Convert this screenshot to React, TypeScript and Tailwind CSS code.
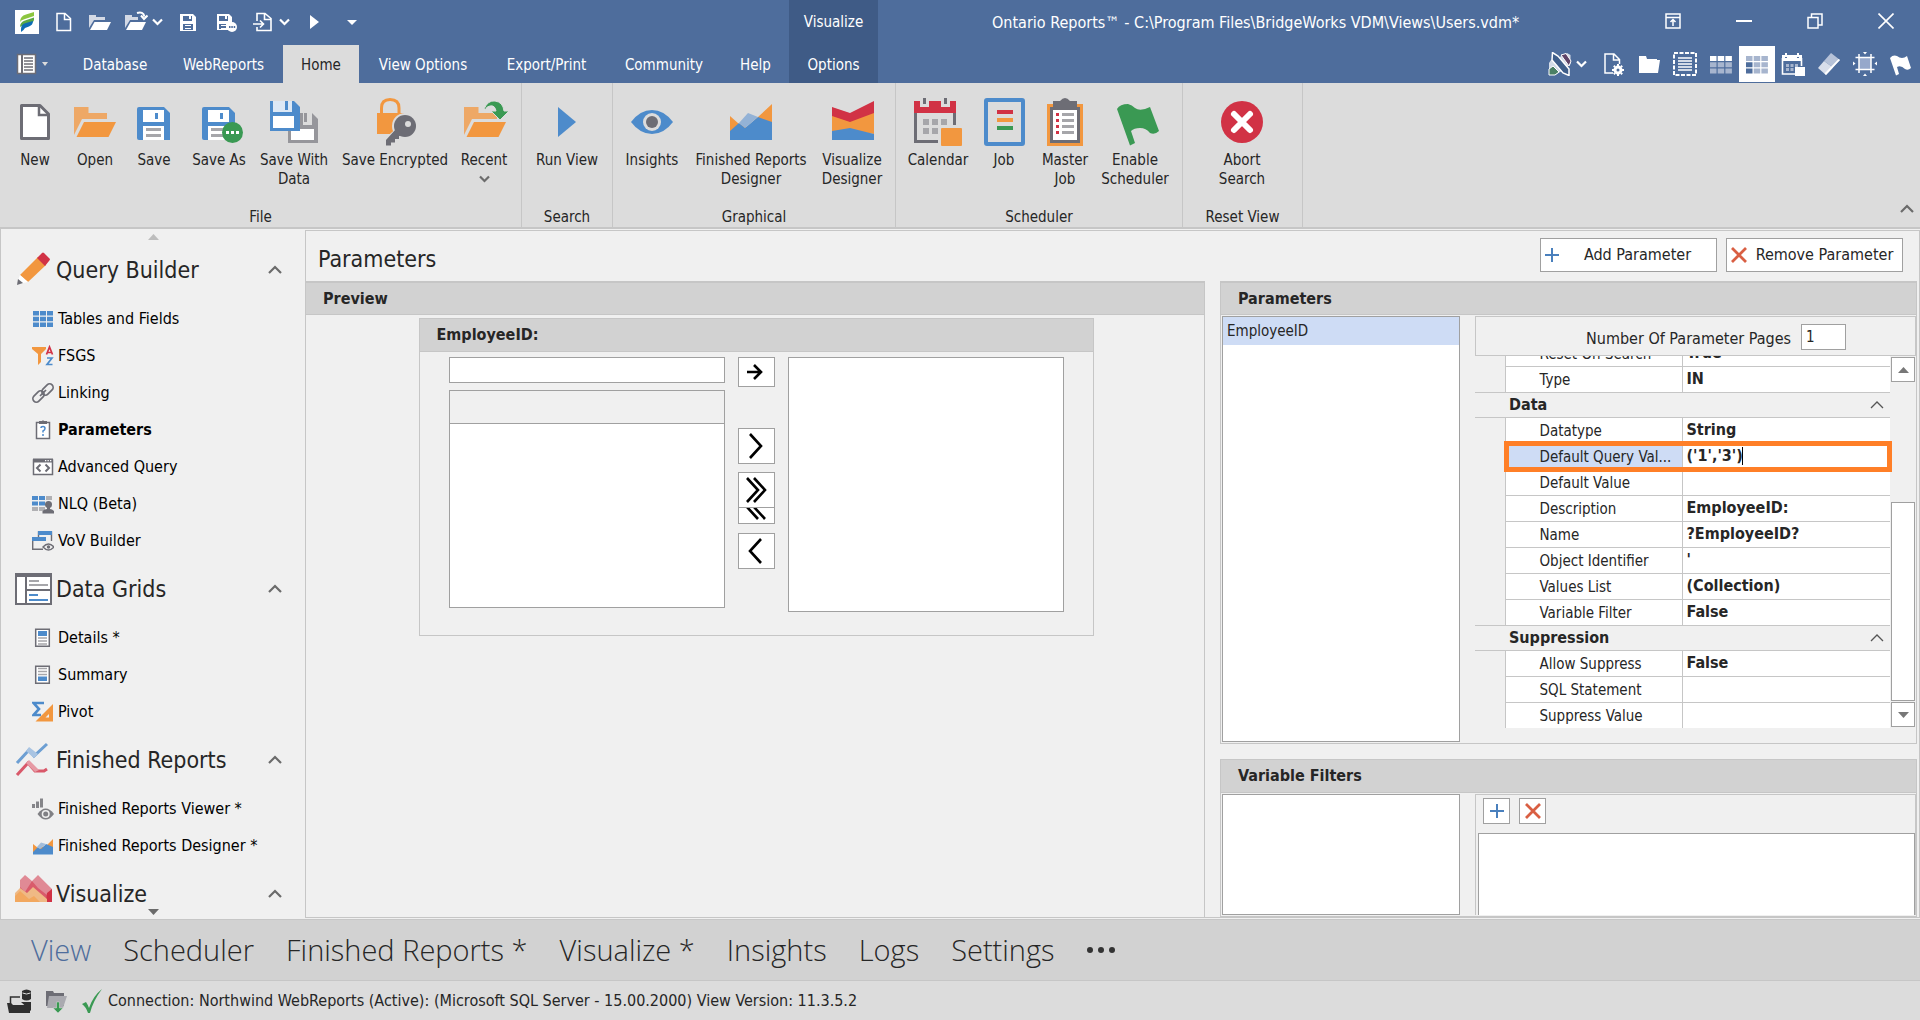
import type { ReactNode } from "react";

const BLUE = "#4d8bcb";
const ORANGE = "#f2973f";
const LIGHT_ORANGE = "#eea866";
const RED = "#d13245";
const GREEN = "#3a9953";
const GREY = "#6d6d75";
const MID = "#a6a6aa";

function Ico({ s = 48, children }: { s?: number; children: ReactNode }) {
  return (
    <svg width={s} height={s} viewBox={`0 0 ${s} ${s}`} fill="none" className="block shrink-0" aria-hidden="true">
      {children}
    </svg>
  );
}

/* ---------- chevrons and small marks ---------- */

function ChevronUp({ color = "#6b6b6b", thin = false }: { color?: string; thin?: boolean }) {
  return (
    <svg width="14" height="10" viewBox="0 0 14 10" fill="none" className="block shrink-0" aria-hidden="true">
      <path d="M1 8 L7 2 L13 8" stroke={color} strokeWidth={thin ? 1.3 : 2.2} />
    </svg>
  );
}

function ChevronDown({ color = "#fff" }: { color?: string }) {
  return (
    <svg width="11" height="8" viewBox="0 0 11 8" fill="none" className="block shrink-0" aria-hidden="true">
      <path d="M1 1.5 L5.5 6 L10 1.5" stroke={color} strokeWidth="2.2" />
    </svg>
  );
}

function Triangle({ up = false, color = "#777" }: { up?: boolean; color?: string }) {
  return (
    <svg width="11" height="6" viewBox="0 0 11 6" className="block shrink-0" aria-hidden="true">
      <path d={up ? "M0 6 L5.5 0 L11 6Z" : "M0 0 L11 0 L5.5 6Z"} fill={color} />
    </svg>
  );
}

function PlusMark() {
  return (
    <svg width="14" height="14" viewBox="0 0 14 14" className="block shrink-0" aria-hidden="true">
      <path d="M7 0V14M0 7H14" stroke="#4a80bd" strokeWidth="2" />
    </svg>
  );
}

function CrossMark() {
  return (
    <svg width="16" height="16" viewBox="0 0 16 16" className="block shrink-0" aria-hidden="true">
      <path d="M1 1L15 15M15 1L1 15" stroke="#d95f43" strokeWidth="2.8" />
    </svg>
  );
}

/* ---------- ribbon icons, 48px ---------- */

const FolderShape = ({ x = 0 }: { x?: number }) => (
  <g transform={`translate(${x} 0)`}>
    <path d="M3 9H17.500V15H36V21H11L3 37Z" fill={LIGHT_ORANGE} />
    <path d="M13 24H45L37.500 39H5.500Z" fill={ORANGE} />
  </g>
);

const NewIcon = () => (
  <Ico>
    <path d="M10.500 7.500H29L37.500 16V40.500H10.500Z" fill="#fff" stroke={GREY} strokeWidth="3" strokeLinejoin="round" />
    <path d="M28 7V17H38" stroke={GREY} strokeWidth="2.500" />
  </Ico>
);
const OpenIcon = () => (
  <Ico>
    <FolderShape />
  </Ico>
);
const FloppyShape = () => (
  <>
    <path d="M9 9H34L40 15V42H9Q7 42 7 40V11Q7 9 9 9Z" fill={BLUE} />
    <path d="M13 12H34V24H13Z" fill="#fff" />
    <path d="M25 15H28V21H25Z" fill={BLUE} />
    <path d="M13 28H34V42H13Z" fill="#fff" />
    <path d="M16 30H31V33H16ZM16 36H31V39H16Z" fill={MID} />
  </>
);
const SaveIcon = () => (
  <Ico>
    <FloppyShape />
  </Ico>
);
const SaveAsIcon = () => (
  <Ico>
    <FloppyShape />
    <circle cx="37.500" cy="34.500" r="10.500" fill={GREEN} />
    <path d="M31 33h3v3h-3zM36 33h3v3h-3zM41 33h3v3h-3z" fill="#fff" />
  </Ico>
);
const SaveWithDataIcon = () => (
  <Ico>
    <path d="M18 15H42L48 21V45H18Z" fill="#96969b" />
    <path d="M33 15H42V27H33Z" fill="#dcdcdc" />
    <path d="M34 15H37V24H34Z" fill="#96969b" />
    <path d="M21 31H44V42H21Z" fill="#fff" />
    <path d="M0 3H24L30 9V33H0Z" fill={BLUE} />
    <path d="M3 3H22V14H3Z" fill="#dce8f5" />
    <path d="M15 3H18V12H15Z" fill={BLUE} />
    <path d="M3 18H24V30H3Z" fill="#fff" />
  </Ico>
);
const LockKeyIcon = () => (
  <Ico>
    <path d="M10.500 17V10Q10.500 1.500 19 1.500Q28 1.500 28 10V17" stroke={ORANGE} strokeWidth="3" />
    <path d="M6 15H33V36H6Z" fill={ORANGE} />
    <circle cx="34" cy="28" r="13" fill="#dcdcdc" />
    <path d="M28 28L12 42V48H22V44H26V40H30L38 35Z" fill="#dcdcdc" />
    <circle cx="34" cy="28" r="11" fill={GREY} />
    <path d="M25 31L15 42V47.500H20V44.500H24V41H28V38L34 37Z" fill={GREY} />
    <circle cx="37" cy="26" r="3" fill="#dcdcdc" />
  </Ico>
);
const RecentIcon = () => (
  <Ico>
    <FolderShape x={1} />
    <path d="M24 11Q28 2 35 3Q43 4 44 13H49L40 22L31 13H36Q35 7 30 8Q27 8 25 12Z" fill={GREEN} stroke="#dcdcdc" />
  </Ico>
);
const RunIcon = () => (
  <Ico>
    <path d="M15 9L33 24L15 39Z" fill={BLUE} />
  </Ico>
);
const EyeIcon = () => (
  <Ico>
    <path d="M3 24Q12 12 24 12Q36 12 45 24Q36 36 24 36Q12 36 3 24Z" fill={BLUE} />
    <circle cx="24" cy="24" r="9" fill="#dcdcdc" />
    <circle cx="24" cy="24" r="6" fill={GREY} />
  </Ico>
);
const AreaIcon = () => (
  <Ico>
    <path d="M3 18L12 26L20 29L31 19L45 6V26L30 38L3 38Z" fill={ORANGE} />
    <path d="M3 33L12 25L18 30L31 19L45 24V42H3Z" fill={BLUE} />
    <path d="M12 25L21 15L31 19L18 30Z" fill="#93b2d6" />
  </Ico>
);
const VisualizeDesignerIcon = () => (
  <Ico>
    <path d="M4 9L22 15L46 3V16L22 26L4 19Z" fill={RED} />
    <path d="M4 18L22 24L46 15V36L22 32L4 34Z" fill={ORANGE} />
    <path d="M4 33L22 30L46 36V42H4Z" fill={BLUE} />
  </Ico>
);
const CalendarIcon = () => (
  <Ico>
    <path d="M1.500 12V43.500H24M40.500 12V27" stroke={GREY} strokeWidth="3" />
    <path d="M0 3H42V15H0Z" fill={RED} />
    <path d="M6 0H15V9H6ZM27 0H36V9H27Z" fill="#dcdcdc" />
    <path d="M9 0H12V6H9ZM30 0H33V6H30Z" fill={GREY} />
    <path d="M9 21h6v6h-6zM18 21h6v6h-6zM27 21h6v6h-6zM9 30h6v6h-6zM18 30h6v6h-6z" fill={MID} />
    <rect x="27" y="30" width="21" height="18" rx="1" fill={ORANGE} />
  </Ico>
);
const JobIcon = () => (
  <Ico>
    <rect x="6" y="2" width="37" height="44" rx="1" stroke={BLUE} strokeWidth="4" />
    <path d="M17 12H33V16H17Z" fill={RED} />
    <path d="M17 20H33V24H17Z" fill={ORANGE} />
    <path d="M17 28H33V32H17Z" fill={GREEN} />
  </Ico>
);
const MasterJobIcon = () => (
  <Ico>
    <path d="M6 6H42V48H6Z" fill={ORANGE} />
    <path d="M9 9H39V45H9Z" fill={GREY} />
    <path d="M12 3H19Q24 -3 29 3H36V12H12Z" fill={GREY} />
    <path d="M12 12H36V42H12Z" fill="#fff" />
    <path d="M15 15h3v3h-3zM15 21h3v3h-3zM15 27h3v3h-3zM15 33h3v3h-3z" fill={RED} />
    <path d="M21 15h12v3h-12zM21 21h12v3h-12zM21 27h12v3h-12zM21 33h12v3h-12z" fill={MID} />
  </Ico>
);
const FlagIcon = () => (
  <Ico>
    <path d="M6 11Q9 6 17 6Q21 7 24 10Q29 14 39 9L48 33Q44 37 39 35Q35 30 29 30Q23 30 20 33L24 45L19 47.500Z" fill={GREEN} />
  </Ico>
);
const AbortIcon = () => (
  <Ico>
    <circle cx="24" cy="24" r="21" fill={RED} />
    <path d="M16 16L32 32M32 16L16 32" stroke="#fff" strokeWidth="6" strokeLinecap="round" />
  </Ico>
);

/* ---------- title bar icons, 24px, white ---------- */

const LogoIcon = () => (
  <Ico s={24}>
    <rect width="24" height="24" fill="#fff" />
    <path d="M5 12Q5 6 11 4.500L19 2V6L10 9Q6 10 5 12Z" fill="#8cc63f" />
    <path d="M5 17Q5 12 10 10.500L19 7.500V10Q18 13 14 14L9 15.500Q6 15.500 5 17Z" fill="#5aa845" />
    <path d="M6 22V19Q6 14 11 13L18 11Q18 15 14 16.500L10 18Q9 20 6 22Z" fill="#0d6cb5" />
  </Ico>
);
const QNew = () => (
  <Ico s={24}>
    <path d="M5 3.500H13L18.500 8.500V20.500H5Z M12.500 3.500V9.500H18.500" stroke="#fff" strokeWidth="1.500" />
  </Ico>
);
const QOpen = () => (
  <Ico s={24}>
    <path d="M1 5H8V7H17V10H6L1 18Z" fill="#d3d9e5" />
    <path d="M6.500 12H23L19 20H2Z" fill="#fff" />
  </Ico>
);
const QRecent = () => (
  <Ico s={24}>
    <path d="M1 5H8V7H14V10H6L1 18Z" fill="#d3d9e5" />
    <path d="M6.500 12H22L18 20H2Z" fill="#fff" />
    <path d="M13 3Q19 1 20.500 6.500M17 5.500L20 9L23.500 5.500" stroke="#fff" strokeWidth="2" />
  </Ico>
);
const QSave = () => (
  <Ico s={24}>
    <path d="M4 4H17L20 7V21H4Z" fill="#fff" />
    <path d="M7 6H16V11H7ZM7 14H17V20H7Z" fill="#4e6d9c" />
    <path d="M13 6H15V9H13ZM9 15H15V16H9ZM9 18H15V19H9Z" fill="#fff" />
  </Ico>
);
const QSaveAs = () => (
  <Ico s={24}>
    <path d="M3 4H15L18 7V20H3Z" fill="#fff" />
    <path d="M5 6H14V11H5ZM5 14H12V19H5Z" fill="#4e6d9c" />
    <path d="M11 6H13V9H11ZM7 15H12V16H7ZM7 18H12V19H7Z" fill="#fff" />
    <circle cx="18" cy="17" r="5" fill="#fff" />
    <path d="M15 16h1.500v2h-1.500zM17.300 16h1.500v2h-1.500zM19.700 16h1.500v2h-1.500z" fill="#4e6d9c" />
  </Ico>
);
const QExit = () => (
  <Ico s={24}>
    <path d="M6 11V3.500H14L20 8.500V20.500H6V17M13.500 3.500V9.500H20" stroke="#fff" strokeWidth="1.600" />
    <path d="M2 14H12M9 10.500L12.500 14L9 17.500" stroke="#fff" strokeWidth="1.600" />
  </Ico>
);
const QPlay = () => (
  <Ico s={24}>
    <path d="M8 5L17 12L8 19Z" fill="#fff" />
  </Ico>
);
const QDrop = () => (
  <Ico s={24}>
    <path d="M7 10H17L12 15Z" fill="#fff" />
  </Ico>
);

/* window buttons */
const WinRibbon = () => (
  <Ico s={16}>
    <path d="M1 1H15V15H1ZM1 4.500H15M8 13V7M5.500 9L8 6.500L10.500 9" stroke="#fff" strokeWidth="1.500" />
  </Ico>
);
const WinMin = () => (
  <Ico s={16}>
    <path d="M0 8H16" stroke="#fff" strokeWidth="2" />
  </Ico>
);
const WinRestore = () => (
  <Ico s={16}>
    <path d="M1 4.500H11V15H1ZM4.500 4V1H15V12H11.500" stroke="#fff" strokeWidth="1.500" />
  </Ico>
);
const WinClose = () => (
  <Ico s={16}>
    <path d="M0.500 0.500L15.500 15.500M15.500 0.500L0.500 15.500" stroke="#fff" strokeWidth="1.600" />
  </Ico>
);

/* view tool icons */
const MenuIcon = () => (
  <Ico s={22}>
    <path d="M1.500 1.500H19.500V20.500H1.500Z" fill="#fff" stroke="#6d6d75" strokeWidth="1.500" />
    <path d="M6 1V21" stroke="#6d6d75" strokeWidth="2" />
    <path d="M8 5H17M8 8H17M8 11H17M8 14H17M8 17H17" stroke="#6d6d75" strokeWidth="1.300" />
  </Ico>
);
const RulerPencil = () => (
  <Ico s={24}>
    <path d="M1 22.500V11L3 8L8 7L19 1L22.500 3V12L17 17L8 22.500Z" fill="#d4dce8" />
    <path d="M1 17L5 14L11 20L7 23H1Z" fill="#4b8065" stroke="#fff" />
    <path d="M13 3L18 1.500L23 9L21 14Z" fill="#5f4468" stroke="#fff" />
    <path d="M4.500 0.500L10 4L21 17V23.500L15 21L4 8Z" fill="#3f5e8a" stroke="#fff" strokeWidth="1.500" />
  </Ico>
);
const DocGear = () => (
  <Ico s={24}>
    <path d="M12 21H4V2H13L18.500 7.500V12M12.500 2V8H18.500" stroke="#fff" strokeWidth="1.500" />
    <circle cx="17" cy="18" r="3" stroke="#fff" strokeWidth="3" />
    <path d="M17 12V14M17 22V24M11 18H13M21 18H23M12.800 13.800L14 15M20 21L21.200 22.200M21.200 13.800L20 15M14 21L12.800 22.200" stroke="#fff" strokeWidth="2" />
  </Ico>
);
const FolderSolid = () => (
  <Ico s={24}>
    <path d="M2 4H9L10 7H20V8H23L21 21H2Z" fill="#fff" />
  </Ico>
);
const ListDashed = () => (
  <Ico s={24}>
    <rect x="1" y="1" width="22" height="22" stroke="#fff" strokeWidth="2" strokeDasharray="4 1.500" />
    <path d="M5 6H19M5 9H19M5 12H19M5 15H19M5 18H19" stroke="#fff" strokeWidth="1.600" />
  </Ico>
);
const Grid3 = ({ top, left, rest }: { top: string; left: string; rest: string }) => (
  <Ico s={24}>
    <path d="M1 4h6.500v5h-6.500z" fill={top} />
    <path d="M8.700 4h6.500v5h-6.500zM16.400 4h6.500v5h-6.500z" fill={top} />
    <path d="M1 10.300h6.500v5h-6.500zM1 16.600h6.500v5h-6.500z" fill={left} />
    <path d="M8.700 10.300h6.500v5h-6.500zM16.400 10.300h6.500v5h-6.500zM8.700 16.600h6.500v5h-6.500zM16.400 16.600h6.500v5h-6.500z" fill={rest} />
  </Ico>
);
const CalWhite = () => (
  <Ico s={24}>
    <path d="M1.500 6V22H14M20.500 6V14" stroke="#fff" strokeWidth="1.600" />
    <path d="M1 3H4V6H6V3H16V6H18V3H21V9H1Z" fill="#fff" />
    <path d="M4 1H6V5H4ZM16 1H18V5H16Z" fill="#fff" />
    <path d="M5 12h3v3h-3zM9.500 12h3v3h-3zM14 12h3v3h-3zM5 16h3v3h-3zM9.500 16h3v3h-3z" fill="#a7b5ce" />
    <path d="M14 15H24V24H14Z" fill="#fff" />
  </Ico>
);
const Eraser = () => (
  <Ico s={24}>
    <path d="M14 1L23 8L16 15.500L7 9Z" fill="#b6c2d8" />
    <path d="M7 9L16 15.500L9 23L1 16Z" fill="#d8deea" />
    <path d="M23 8L9 23L7.500 21.500L21.500 7Z" fill="#fff" />
  </Ico>
);
const FitIcon = () => (
  <Ico s={24}>
    <path d="M6 5H18V18H6Z" fill="#96a8cb" />
    <path d="M6 2V21M18 2V21M2.500 5.500H21.500M2.500 17.500H21.500" stroke="#fff" strokeWidth="1.500" />
    <path d="M10 0H14L12 2.500ZM10 24H14L12 21.500ZM0 9.500V13.500L2.500 11.500ZM24 9.500V13.500L21.500 11.500Z" fill="#fff" />
  </Ico>
);
const FlagWhite = () => (
  <Ico s={24}>
    <path d="M1 6Q4 2.500 8 4Q13 8 18 4L22 16Q19 19 16 17Q12 13 8 15L10 22L7 23.500Z" fill="#fff" />
  </Ico>
);

/* ---------- sidebar icons ---------- */

const PencilBig = () => (
  <Ico s={36}>
    <path d="M5 23L23 5L31 13L13 30Z" fill={ORANGE} />
    <path d="M22 6L27 1Q28 0 29 1L35 7Q35 8 34 9L30 14Z" fill={RED} />
    <path d="M5 23L13 30L8 31L3 28Z" fill="#fff" />
    <path d="M3 27L8 31L2 33Z" fill={GREY} />
  </Ico>
);
const DataGridBig = () => (
  <Ico s={38}>
    <path d="M1 4H36V34H1Z" fill="#fff" stroke={GREY} strokeWidth="2" />
    <path d="M0 3H37V7H0Z" fill={GREY} />
    <path d="M11 6V34M11 20H36" stroke={GREY} strokeWidth="2" />
    <path d="M14 11H24M14 15H33" stroke={MID} strokeWidth="2" />
    <path d="M14 25H23M14 30H33" stroke={BLUE} strokeWidth="2" />
  </Ico>
);
const ReportsBig = () => (
  <Ico s={36}>
    <path d="M2 21L14 8L19 14L32 2" stroke="#6d9fd3" strokeWidth="3" />
    <path d="M11 9L14 5L23 12L19 16Z" fill="#a9c4e2" />
    <path d="M2 33L13 21L20 29H29L32 27" stroke="#d9596a" strokeWidth="3" />
    <path d="M11 21L14 18L24 28L20 30Z" fill="#e69aa4" />
  </Ico>
);
const VisualizeBig = () => (
  <Ico s={38}>
    <path d="M5 5L10 0L17 6L23 0L37 14V27H5Z" fill="#e08a95" />
    <path d="M5 12L10 17L17 6L23 13L32 20V27H5Z" fill="#d95b6b" />
    <path d="M32 18L37 14V27H31Z" fill={RED} />
    <path d="M0 18L5 13L12 18L18 12L32 24V27H0Z" fill="#efb985" />
    <path d="M0 21L5 16L14 24L19 21L25 27H0Z" fill="#f2a85f" />
  </Ico>
);

const TablesIcon = () => (
  <Ico s={22}>
    <path d="M1 3h6v4.500h-6zM8 3h6v4.500h-6zM15 3h6v4.500h-6zM1 8.800h6v4.500h-6zM8 8.800h6v4.500h-6zM15 8.800h6v4.500h-6zM1 14.600h6v4.500h-6zM8 14.600h6v4.500h-6zM15 14.600h6v4.500h-6z" fill={BLUE} />
  </Ico>
);
const FsgsIcon = () => (
  <Ico s={22}>
    <path d="M0 2H14V4L9 9V17L6 20V9L0 4Z" fill={ORANGE} />
    <path d="M14.500 9.500L17.500 2L20.500 9.500M15.500 7.500H19.500" stroke={RED} strokeWidth="1.700" />
    <path d="M15 13H20L15 19.500H20.500" stroke={BLUE} strokeWidth="1.700" />
  </Ico>
);
const LinkIcon = () => (
  <Ico s={22}>
    <g stroke={GREY} strokeWidth="1.700">
      <rect x="9" y="4" width="13" height="7" rx="3.500" transform="rotate(-45 15.500 7.500)" />
      <rect x="0" y="11" width="13" height="7" rx="3.500" transform="rotate(-45 6.500 14.500)" />
      <path d="M8 14L14 8" />
    </g>
  </Ico>
);
const ParamIcon = () => (
  <Ico s={22}>
    <path d="M4.500 3.500H17.500V19.500H4.500Z" fill="#fff" stroke={GREY} strokeWidth="1.500" />
    <path d="M7 2H10Q11 0.500 12 2H15V5H7Z" fill={GREY} />
    <path d="M9 9Q9 7.500 11 7.500Q13 7.500 13 9.500Q13 11 11 12V13.500M11 15V17" stroke={BLUE} strokeWidth="1.500" />
  </Ico>
);
const AdvIcon = () => (
  <Ico s={22}>
    <path d="M1.500 4H20.500V18.500H1.500Z" fill="#fff" stroke={GREY} strokeWidth="1.500" />
    <path d="M1 2.500H21V6.500H1Z" fill={GREY} />
    <path d="M13 4h1.300v1.300h-1.300zM15.500 4h1.300v1.300h-1.300zM18 4h1.300v1.300h-1.300z" fill="#fff" />
    <path d="M8.500 8.500L5 12L8.500 15.500M13.500 8.500L17 12L13.500 15.500" stroke={GREY} strokeWidth="2" />
  </Ico>
);
const NlqIcon = () => (
  <Ico s={22}>
    <path d="M0 3h6v4h-6zM7 3h6v4h-6zM0 8.500h6v4h-6zM7 8.500h6v4h-6z" fill={BLUE} />
    <path d="M14 3h6v4h-6zM0 14h6v4h-6zM7 14h6v4h-6z" fill="#b0b0b3" />
    <circle cx="16.500" cy="11.500" r="3.500" fill={GREY} />
    <path d="M10.500 20.500V18Q13 16 15 16V13H18V16Q20 16 22 18V20.500Z" fill={GREY} />
  </Ico>
);
const VovIcon = () => (
  <Ico s={22}>
    <path d="M6.500 8V2H19.500V11M0.700 8V19.300H11" stroke={GREY} strokeWidth="1.400" />
    <path d="M6 1H20V5H6ZM0 7H14V11H0Z" fill={BLUE} />
    <path d="M11 17Q16.500 11 22 17Q16.500 23 11 17Z" fill="#f0f0f0" stroke={GREY} strokeWidth="1.400" />
    <circle cx="16.500" cy="17" r="1.700" fill={GREY} />
  </Ico>
);
const DetailsIcon = () => (
  <Ico s={22}>
    <path d="M3.700 2.200H17.300V19.300H3.700Z" fill="#fff" stroke={GREY} strokeWidth="1.500" />
    <path d="M6 4H15V9H6Z" fill={BLUE} />
    <path d="M6 11H15M6 14H15M6 17H15" stroke={MID} strokeWidth="1.500" />
  </Ico>
);
const SummaryIcon = () => (
  <Ico s={22}>
    <path d="M3.700 2.200H17.300V19.300H3.700Z" fill="#fff" stroke={GREY} strokeWidth="1.500" />
    <path d="M6 12.500H15V17H6Z" fill={BLUE} />
    <path d="M6 4.500H15M6 7.500H15M6 10.500H15" stroke={MID} strokeWidth="1.500" />
  </Ico>
);
const PivotIcon = () => (
  <Ico s={22}>
    <path d="M12 2H1.500L7 8L1.500 14H9" stroke={BLUE} strokeWidth="2.600" />
    <path d="M21 3V20.500H3.500Z" fill={ORANGE} />
    <path d="M17 13V16.500H13.500Z" fill="#f0f0f0" />
  </Ico>
);
const ViewerIcon = () => (
  <Ico s={22}>
    <path d="M0 6h3v4h-3zM4 3.500h3v6.500h-3zM8 0.500h3v9h-3z" fill="#858589" />
    <path d="M5.500 16Q9.500 10.500 13.700 10.500Q18 10.500 22 16Q18 21.500 13.700 21.500Q9.500 21.500 5.500 16Z" fill="#808084" />
    <circle cx="13.700" cy="16" r="4" fill="#f0f0f0" />
    <circle cx="13.700" cy="16" r="2.500" fill="#808084" />
  </Ico>
);
const DesignerIcon = () => (
  <Ico s={22}>
    <path d="M1 9L6 13L14 11L21 4V13L1 18Z" fill={ORANGE} />
    <path d="M1 17L6 12L9 14L14 9L21 12V19.500H1Z" fill={BLUE} />
    <path d="M5 12L9 7.500L14 9L8 14Z" fill="#a3bdda" />
  </Ico>
);

/* ---------- status bar icons ---------- */

const DbFolder = () => (
  <Ico s={24}>
    <path d="M15 2Q19.500 -1 24 2V10Q19.500 13 15 10Z" fill="#2f2f2f" />
    <path d="M15.500 4Q19.500 6 23.500 4" stroke="#dcdcdc" />
    <path d="M3.500 15V8H13" stroke="#2f2f2f" strokeWidth="1.500" />
    <path d="M0 14H4L6 16H23V24H2Z" fill="#2f2f2f" />
    <path d="M14 13H24V22Z" fill="#2f2f2f" />
  </Ico>
);
const FolderDown = () => (
  <Ico s={24}>
    <path d="M1 2H8L9 4H19V17H1Z" fill={GREY} />
    <path d="M4 7H22L18 19H2Z" fill="#aaaab0" />
    <path d="M11.500 13H14.500V19H18L13 24L8 19H11.500Z" fill={GREEN} stroke="#dcdcdc" strokeWidth="0.500" />
  </Ico>
);
const Check = () => (
  <Ico s={24}>
    <path d="M2 15L6 13Q8 16 9 19Q13 7 22 0Q13 12 10 24H8Q6 18 2 15Z" fill={GREEN} />
  </Ico>
);

/* ---------- data ---------- */

type RibbonItem = { lines: string[]; icon: ReactNode; w: string; drop?: boolean };
type RibbonGroup = { title: string; w: string; items: RibbonItem[] };

const GROUPS: RibbonGroup[] = [
  {
    title: "File",
    w: "w-[522px] pl-[9px]",
    items: [
      { lines: ["New"], icon: <NewIcon />, w: "w-[52px]" },
      { lines: ["Open"], icon: <OpenIcon />, w: "w-[68px]" },
      { lines: ["Save"], icon: <SaveIcon />, w: "w-[50px]" },
      { lines: ["Save As"], icon: <SaveAsIcon />, w: "w-[80px]" },
      { lines: ["Save With", "Data"], icon: <SaveWithDataIcon />, w: "w-[70px]" },
      { lines: ["Save Encrypted"], icon: <LockKeyIcon />, w: "w-[132px]" },
      { lines: ["Recent"], icon: <RecentIcon />, w: "w-[46px]", drop: true },
    ],
  },
  { title: "Search", w: "w-[91px]", items: [{ lines: ["Run View"], icon: <RunIcon />, w: "w-[90px]" }] },
  {
    title: "Graphical",
    w: "w-[283px] pl-[9px]",
    items: [
      { lines: ["Insights"], icon: <EyeIcon />, w: "w-[60px]" },
      { lines: ["Finished Reports", "Designer"], icon: <AreaIcon />, w: "w-[138px]" },
      { lines: ["Visualize", "Designer"], icon: <VisualizeDesignerIcon />, w: "w-[64px]" },
    ],
  },
  {
    title: "Scheduler",
    w: "w-[287px] pl-[9px]",
    items: [
      { lines: ["Calendar"], icon: <CalendarIcon />, w: "w-[66px]" },
      { lines: ["Job"], icon: <JobIcon />, w: "w-[66px]" },
      { lines: ["Master", "Job"], icon: <MasterJobIcon />, w: "w-[56px]" },
      { lines: ["Enable", "Scheduler"], icon: <FlagIcon />, w: "w-[84px]" },
    ],
  },
  { title: "Reset View", w: "w-[120px]", items: [{ lines: ["Abort", "Search"], icon: <AbortIcon />, w: "w-[118px]" }] },
];

const TABS = [
  { t: "Database", w: "w-[98px]" },
  { t: "WebReports", w: "w-[119px]" },
  { t: "Home", w: "w-[76px]", on: true },
  { t: "View Options", w: "w-[128px]" },
  { t: "Export/Print", w: "w-[119px]" },
  { t: "Community", w: "w-[116px]" },
  { t: "Help", w: "w-[67px]" },
];

const NAV = [
  {
    title: "Query Builder",
    icon: <PencilBig />,
    items: [
      { t: "Tables and Fields", icon: <TablesIcon /> },
      { t: "FSGS", icon: <FsgsIcon /> },
      { t: "Linking", icon: <LinkIcon /> },
      { t: "Parameters", icon: <ParamIcon />, on: true },
      { t: "Advanced Query", icon: <AdvIcon /> },
      { t: "NLQ (Beta)", icon: <NlqIcon /> },
      { t: "VoV Builder", icon: <VovIcon /> },
    ],
  },
  {
    title: "Data Grids",
    icon: <DataGridBig />,
    items: [
      { t: "Details *", icon: <DetailsIcon /> },
      { t: "Summary", icon: <SummaryIcon /> },
      { t: "Pivot", icon: <PivotIcon /> },
    ],
  },
  {
    title: "Finished Reports",
    icon: <ReportsBig />,
    items: [
      { t: "Finished Reports Viewer *", icon: <ViewerIcon /> },
      { t: "Finished Reports Designer *", icon: <DesignerIcon /> },
    ],
  },
  { title: "Visualize", icon: <VisualizeBig />, items: [] },
];

type Row = { head?: string; k?: string; v?: string; edit?: boolean };
const ROWS: Row[] = [
  { k: "Reset On Search", v: "True" },
  { k: "Type", v: "IN" },
  { head: "Data" },
  { k: "Datatype", v: "String" },
  { k: "Default Query Val...", v: "('1','3')", edit: true },
  { k: "Default Value", v: "" },
  { k: "Description", v: "EmployeeID:" },
  { k: "Name", v: "?EmployeeID?" },
  { k: "Object Identifier", v: "'" },
  { k: "Values List", v: "(Collection)" },
  { k: "Variable Filter", v: "False" },
  { head: "Suppression" },
  { k: "Allow Suppress", v: "False" },
  { k: "SQL Statement", v: "" },
  { k: "Suppress Value", v: "" },
];

const VIEW_TABS = ["View", "Scheduler", "Finished Reports *", "Visualize *", "Insights", "Logs", "Settings"];

/* ---------- sections ---------- */

function TitleBar() {
  return (
    <header className="flex h-[83px] shrink-0 bg-[#4e6d9c] text-white">
      <div className="flex w-[789px] shrink-0 flex-col">
        <div className="flex h-[45px] items-center pb-px pl-[15px]">
          <LogoIcon />
          <div className="flex items-center pl-[13px]">
            <button aria-label="New"><QNew /></button>
            <button aria-label="Open" className="ml-3"><QOpen /></button>
            <button aria-label="Open recent" className="ml-3 flex items-center gap-1"><QRecent /><ChevronDown /></button>
            <button aria-label="Save" className="ml-[13px]"><QSave /></button>
            <button aria-label="Save as" className="ml-[14px]"><QSaveAs /></button>
            <button aria-label="Export" className="ml-[13px] flex items-center gap-1"><QExit /><ChevronDown /></button>
            <button aria-label="Run" className="ml-3"><QPlay /></button>
            <button aria-label="Customize toolbar" className="ml-[14px]"><QDrop /></button>
          </div>
        </div>
        <nav className="flex h-[38px]">
          <button aria-label="Application menu" className="flex w-[66px] items-center gap-1 pl-4">
            <MenuIcon />
            <svg width="6" height="4" viewBox="0 0 6 4" aria-hidden="true"><path d="M0 0H6L3 4Z" fill="#dcdcdc" /></svg>
          </button>
          {TABS.map((x) => (
            <button key={x.t} className={`${x.w} whitespace-nowrap pt-0.5 text-center ${x.on ? "bg-[#dcdcdc] text-[#262626]" : ""}`}>
              {x.t}
            </button>
          ))}
        </nav>
      </div>
      <div className="flex w-[89px] shrink-0 flex-col bg-[#3f5b86] text-center">
        <span className="h-[45px] leading-[45px]">Visualize</span>
        <button className="h-[38px] pt-0.5">Options</button>
      </div>
      <div className="flex min-w-0 flex-1 flex-col">
        <div className="flex h-[45px] items-center">
          <h1 className="flex-1 truncate pl-[114px] text-base leading-[42px]">
            Ontario Reports™ - C:\Program Files\BridgeWorks VDM\Views\Users.vdm*
          </h1>
          <div className="flex gap-[55px] pb-1 pr-[26px]">
            <button aria-label="Ribbon display options"><WinRibbon /></button>
            <button aria-label="Minimize"><WinMin /></button>
            <button aria-label="Restore"><WinRestore /></button>
            <button aria-label="Close"><WinClose /></button>
          </div>
        </div>
        <div className="flex h-[38px] items-center justify-end pr-px">
          <button aria-label="Design" className="mr-2 flex items-center gap-1"><RulerPencil /><ChevronDown /></button>
          <button aria-label="Page setup" className="flex h-9 w-9 items-center justify-center"><DocGear /></button>
          <button aria-label="Folder" className="flex h-9 w-9 items-center justify-center"><FolderSolid /></button>
          <button aria-label="Report" className="flex h-9 w-9 items-center justify-center"><ListDashed /></button>
          <button aria-label="Header grid" className="flex h-9 w-9 items-center justify-center">
            <Grid3 top="#fff" left="#a7b5ce" rest="#a7b5ce" />
          </button>
          <button aria-label="Column grid" className="flex h-9 w-9 items-center justify-center bg-white">
            <Grid3 top="#a7b5ce" left="#4e6d9c" rest="#a7b5ce" />
          </button>
          <button aria-label="Schedule" className="flex h-9 w-9 items-center justify-center"><CalWhite /></button>
          <button aria-label="Clear" className="flex h-9 w-9 items-center justify-center"><Eraser /></button>
          <button aria-label="Fit" className="flex h-9 w-9 items-center justify-center"><FitIcon /></button>
          <button aria-label="Flag" className="flex h-9 w-9 items-center justify-center"><FlagWhite /></button>
        </div>
      </div>
    </header>
  );
}

function Ribbon() {
  return (
    <section className="flex h-[146px] shrink-0 border-b-2 border-[#c6c6c6] bg-[#dcdcdc]">
      {GROUPS.map((g) => (
        <div key={g.title} className={`flex shrink-0 flex-col border-r border-[#c6c6c6] ${g.w}`}>
          <div className="flex flex-1 items-start pt-[15px]">
            {g.items.map((it) => (
              <button key={it.lines.join(" ")} className={`flex shrink-0 flex-col items-center ${it.w}`}>
                {it.icon}
                <span className="mt-[5px] flex flex-col items-center whitespace-nowrap leading-[19px]">
                  {it.lines.map((l) => (
                    <span key={l}>{l}</span>
                  ))}
                </span>
                {it.drop && <span className="mt-[5px]"><ChevronDown color="#6b6b6b" /></span>}
              </button>
            ))}
          </div>
          <div className={`text-center leading-[19px] ${g.items.length > 1 ? "pr-[9px]" : ""}`}>{g.title}</div>
        </div>
      ))}
      <div className="flex flex-1 items-end justify-end pb-[13px] pr-[6px]">
        <button aria-label="Collapse ribbon"><ChevronUp /></button>
      </div>
    </section>
  );
}

function Sidebar() {
  return (
    <aside className="relative flex w-[305px] shrink-0 flex-col overflow-hidden border-l border-[#c6c6c6]">
      <div className="flex h-[11px] shrink-0 items-center justify-center pt-1">
        <Triangle up color="#bdbdbd" />
      </div>
      {NAV.map((s) => (
        <section key={s.title} className="shrink-0">
          <button className="flex h-[60px] w-full items-center pl-[14px] pr-[23px] text-[#262626]">
            <span className="w-[41px]">{s.icon}</span>
            <span className="flex-1 text-left text-[23px]">{s.title}</span>
            <ChevronUp />
          </button>
          {s.items.map((it) => (
            <a key={it.t} href="#" className={`flex h-[37px] items-center gap-1 pl-[31px] text-base text-black ${"on" in it && it.on ? "font-bold" : ""}`}>
              {it.icon}
              {it.t}
            </a>
          ))}
        </section>
      ))}
      <div className="absolute bottom-1 left-0 flex w-full justify-center">
        <Triangle color="#6b6b6b" />
      </div>
    </aside>
  );
}

function PanelHead({ children, size = "h-[34px] border-t-2" }: { children: ReactNode; size?: string }) {
  return (
    <h3 className={`shrink-0 border-b border-[#c6c6c6] bg-[#d2d2d2] px-[17px] text-base font-bold leading-[31px] text-[#262626] ${size}`}>
      {children}
    </h3>
  );
}

function MoveButton({ label, d, h }: { label: string; d: string; h: string }) {
  return (
    <button aria-label={label} className={`flex w-[37px] items-center justify-center overflow-hidden border border-[#a0a0a0] bg-white ${h}`}>
      <svg width="28" height="28" viewBox="0 0 28 28" fill="none" className="block shrink-0" aria-hidden="true">
        <path d={d} stroke="#000" strokeWidth="2.600" />
      </svg>
    </button>
  );
}

function Preview() {
  return (
    <section className="flex min-w-0 flex-1 flex-col border-r border-[#c6c6c6]">
      <PanelHead>Preview</PanelHead>
      <div className="flex justify-center pl-0.5 pt-[3px]">
        <div className="w-[675px] border border-[#c6c6c6] pb-[23px]">
          <PanelHead size="h-[33px]">EmployeeID:</PanelHead>
          <div className="flex justify-center gap-[13px] pt-[5px]">
            <div className="flex w-[276px] flex-col">
              <input aria-label="Search value" className="h-[26px] border border-[#a0a0a0] bg-white px-1" />
              <div className="mt-[7px] flex h-[218px] flex-col border border-[#a0a0a0] bg-white">
                <div className="h-[33px] border-b border-[#a0a0a0] bg-[#f0f0f0]" />
              </div>
            </div>
            <div className="flex flex-col">
              <MoveButton label="Add value" h="h-[30px]" d="M5 14H18M12 7L19 14L12 21" />
              <div className="h-[41px]" />
              <MoveButton label="Move right" h="h-9" d="M8 2L19 14L8 26" />
              <div className="h-2" />
              <MoveButton label="Move all right" h="h-9" d="M5 2L16 14L5 26M12 2L23 14L12 26" />
              <button aria-label="Move all left" className="flex h-4 w-[37px] justify-center overflow-hidden border border-t-0 border-[#a0a0a0] bg-white">
                <svg width="28" height="14" viewBox="0 0 28 14" fill="none" className="block shrink-0" aria-hidden="true">
                  <path d="M5 -1L16 11M12 -1L23 11" stroke="#000" strokeWidth="2.600" />
                </svg>
              </button>
              <div className="h-[9px]" />
              <MoveButton label="Move left" h="h-9" d="M19 2L8 14L19 26" />
            </div>
            <div className="h-[255px] w-[276px] border border-[#a0a0a0] bg-white" />
          </div>
        </div>
      </div>
    </section>
  );
}

function PropertyGrid() {
  return (
    <div className="flex h-[372px] overflow-hidden">
      <div className="w-[415px]">
        <table className="-mt-4 w-full table-fixed border-collapse text-[#262626]">
          <colgroup>
            <col className="w-[30px]" />
            <col className="w-[177px]" />
            <col />
          </colgroup>
          <tbody>
            {ROWS.map((r, i) =>
              r.head ? (
                <tr key={i} className="h-[25px] border-y border-[#c6c6c6]">
                  <th />
                  <th colSpan={2} className="p-0 pl-1 text-base">
                    <span className="flex h-6 items-center justify-between pr-1.5">
                      {r.head}
                      <ChevronUp thin color="#555" />
                    </span>
                  </th>
                </tr>
              ) : (
                <tr key={i} className="h-[26px] bg-white">
                  <td className={`bg-[#f0f0f0] p-0 ${i === ROWS.length - 1 ? "border-b border-[#c6c6c6]" : ""}`} />
                  <th
                    scope="row"
                    className={`whitespace-nowrap border border-[#c6c6c6] p-0 pl-[34px] text-left font-normal leading-6 ${r.edit ? "bg-[#cedcf5]" : ""}`}
                  >
                    {r.k}
                  </th>
                  <td className="relative border-y border-[#c6c6c6] p-0 pl-1 pb-0.5 text-base font-bold leading-[22px]">
                    {r.edit ? (
                      <span className="flex items-center">
                        <input aria-label="Default Query Value" defaultValue={r.v} className="h-[22px] w-[55px] bg-transparent font-bold outline-none" />
                        <span className="h-[18px] w-px bg-black" />
                        <span className="pointer-events-none absolute -left-[179px] -top-[3px] h-[31px] w-[388px] border-5 border-[#ff7f27]" />
                      </span>
                    ) : (
                      r.v
                    )}
                  </td>
                </tr>
              ),
            )}
          </tbody>
        </table>
      </div>
      <div className="ml-px flex w-6 flex-col pt-px">
        <button aria-label="Scroll up" className="flex h-[25px] items-center justify-center border border-[#a0a0a0] bg-white"><Triangle up /></button>
        <div className="h-[120px]" />
        <div className="h-[199px] border border-[#a0a0a0] bg-white" />
        <button aria-label="Scroll down" className="mt-px flex h-[25px] items-center justify-center border border-[#a0a0a0] bg-white"><Triangle /></button>
      </div>
    </div>
  );
}

function RightColumn() {
  return (
    <div className="flex w-[699px] shrink-0 flex-col pr-0.5">
      <section className="flex flex-1 flex-col border border-t-0 border-[#c6c6c6]">
        <PanelHead>Parameters</PanelHead>
        <div className="flex flex-1 pb-px pl-px pt-px">
          <ul className="w-[238px] border border-[#a0a0a0] bg-white">
            <li className="h-7 bg-[#cedcf5] pl-1 text-[15px] leading-7 text-[#262626]">EmployeeID</li>
          </ul>
          <div className="ml-[15px] w-[441px]">
            <label className="flex h-10 items-center border border-[#c6c6c6] pl-[110px] pt-0.5 text-[#262626]">
              <span className="w-[215px] pt-1 text-base">Number Of Parameter Pages</span>
              <input defaultValue="1" className="h-[26px] w-[45px] border border-[#a0a0a0] bg-white pl-1" />
            </label>
            <PropertyGrid />
          </div>
        </div>
      </section>
      <section className="mt-[15px] flex h-[158px] shrink-0 flex-col border border-[#c6c6c6]">
        <PanelHead size="h-[33px]">Variable Filters</PanelHead>
        <div className="flex flex-1 pb-px pl-px pt-px">
          <div className="w-[238px] border border-[#a0a0a0] bg-white" />
          <div className="ml-[15px] flex w-[441px] flex-col border border-b-0 border-[#c6c6c6]">
            <div className="flex gap-[9px] pl-[7px] pt-[3px]">
              <button aria-label="Add filter" className="flex h-[26px] w-[27px] items-center justify-center border border-[#a0a0a0] bg-white"><PlusMark /></button>
              <button aria-label="Remove filter" className="flex h-[26px] w-[27px] items-center justify-center border border-[#a0a0a0] bg-white"><CrossMark /></button>
            </div>
            <div className="ml-0.5 mt-[9px] flex-1 border border-b-0 border-[#a0a0a0] bg-white" />
          </div>
        </div>
      </section>
    </div>
  );
}

export default function App() {
  return (
    <div className="flex h-screen flex-col overflow-hidden bg-[#f0f0f0] font-['DejaVu_Sans_Condensed','Noto_Sans',sans-serif] text-[15px] text-[#262626]">
      <TitleBar />
      <Ribbon />
      <div className="flex min-h-0 flex-1">
        <Sidebar />
        <main className="mb-px mt-px flex min-w-0 flex-1 flex-col border border-[#c6c6c6]">
          <div className="flex h-[50px] shrink-0 items-center justify-between pl-3 pr-4">
            <h2 className="pb-0.5 pt-2 text-[23px]">Parameters</h2>
            <div className="flex gap-[9px] pb-0.5">
              <button className="flex h-[34px] w-[177px] items-center border border-[#a0a0a0] bg-white pl-1 text-base">
                <PlusMark />
                <span className="flex-1 text-center">Add Parameter</span>
              </button>
              <button className="flex h-[34px] w-[177px] items-center border border-[#a0a0a0] bg-white pl-1 text-base">
                <CrossMark />
                <span className="flex-1 text-center">Remove Parameter</span>
              </button>
            </div>
          </div>
          <div className="flex min-h-0 flex-1 gap-[15px]">
            <Preview />
            <RightColumn />
          </div>
        </main>
      </div>
      <nav className="flex h-[61px] shrink-0 items-center gap-8 border-t border-[#c6c6c6] bg-[#d2d2d2] pl-[31px] font-['Open_Sans',sans-serif] text-[29px] font-light">
        {VIEW_TABS.map((t, i) => (
          <button key={t} className={`whitespace-nowrap ${i === 0 ? "text-[#4e6d9c]" : ""}`}>{t}</button>
        ))}
        <button aria-label="More views">
          <svg width="28" height="6" viewBox="0 0 28 6" fill="#333" aria-hidden="true">
            <circle cx="3" cy="3" r="3" />
            <circle cx="14" cy="3" r="3" />
            <circle cx="25" cy="3" r="3" />
          </svg>
        </button>
      </nav>
      <footer className="flex h-10 shrink-0 items-center border-t border-[#c6c6c6] bg-[#dcdcdc] pl-[7px] pt-px text-base">
        <DbFolder />
        <span className="ml-[14px]"><FolderDown /></span>
        <span className="ml-[11px] mr-1"><Check /></span>
        Connection: Northwind WebReports (Active): (Microsoft SQL Server - 15.00.2000) View Version: 11.3.5.2
      </footer>
    </div>
  );
}
